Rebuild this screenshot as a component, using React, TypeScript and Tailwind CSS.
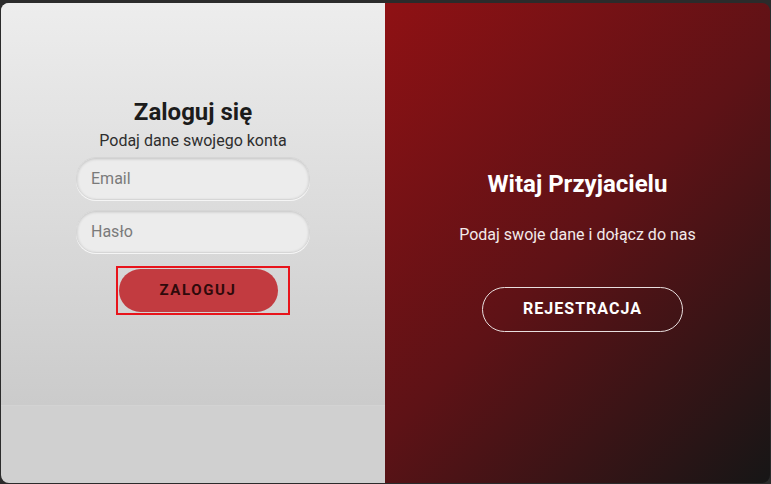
export default function App() {
  return (
    <div className="w-[771px] h-[484px] bg-[#2b2b2b] pt-[3px] pl-px font-['Roboto',sans-serif]">
      <div className="flex w-[769px] h-[480px] rounded-lg overflow-hidden">
        {/* Left: login form */}
        <div className="w-[384px] flex flex-col bg-[#d0d0d0]">
          <div className="h-[402px] flex flex-col items-center justify-center pt-[4px] bg-[linear-gradient(to_bottom,#ededed,#cbcbcb)]">
            <h1 className="text-[24px] font-bold text-[#1c1c1c] leading-[30px]">Zaloguj się</h1>
            <p className="mt-[3px] text-base text-[#2e2e2e] leading-[22px]">Podaj dane swojego konta</p>
            <input
              placeholder="Email"
              className="mt-[5px] w-[234px] h-[43px] rounded-[20px] bg-[#ececec] border border-[#d6d6d6] shadow-[inset_0_1px_3px_rgba(0,0,0,0.18),0_1px_0_#f5f5f5] px-[14px] text-base text-[#333] placeholder:text-[#7a7a7a] outline-none"
            />
            <input
              placeholder="Hasło"
              type="password"
              className="mt-[10px] w-[234px] h-[43px] rounded-[20px] bg-[#ececec] border border-[#d6d6d6] shadow-[inset_0_1px_3px_rgba(0,0,0,0.18),0_1px_0_#f5f5f5] px-[14px] text-base text-[#333] placeholder:text-[#7a7a7a] outline-none"
            />
            <div className="mt-[13px] ml-[19px] w-[174px] h-[49px] border-2 border-[#e8141b] pl-px pt-px">
              <button className="w-[159px] h-[43px] rounded-full bg-[#c23b40] text-[15px] font-bold tracking-[1.6px] text-[#2f0a0b]">
                ZALOGUJ
              </button>
            </div>
          </div>
          <div className="flex-1 border-t border-[#d3d3d3]" />
        </div>

        {/* Right: register */}
        <div className="flex-1 flex flex-col items-center justify-center pt-[14px] bg-[linear-gradient(135deg,#8f1114_0%,#5e1216_50%,#161616_100%)] text-white">
          <h2 className="text-[24px] font-bold leading-[30px]">Witaj Przyjacielu</h2>
          <p className="mt-[25px] text-base leading-[22px] text-[#f3eaea]">Podaj swoje dane i dołącz do nas</p>
          <button className="mt-[41px] ml-[10px] w-[201px] h-[45px] rounded-full border border-[#e8dede] text-base font-bold tracking-[1px]">
            REJESTRACJA
          </button>
        </div>
      </div>
    </div>
  );
}
